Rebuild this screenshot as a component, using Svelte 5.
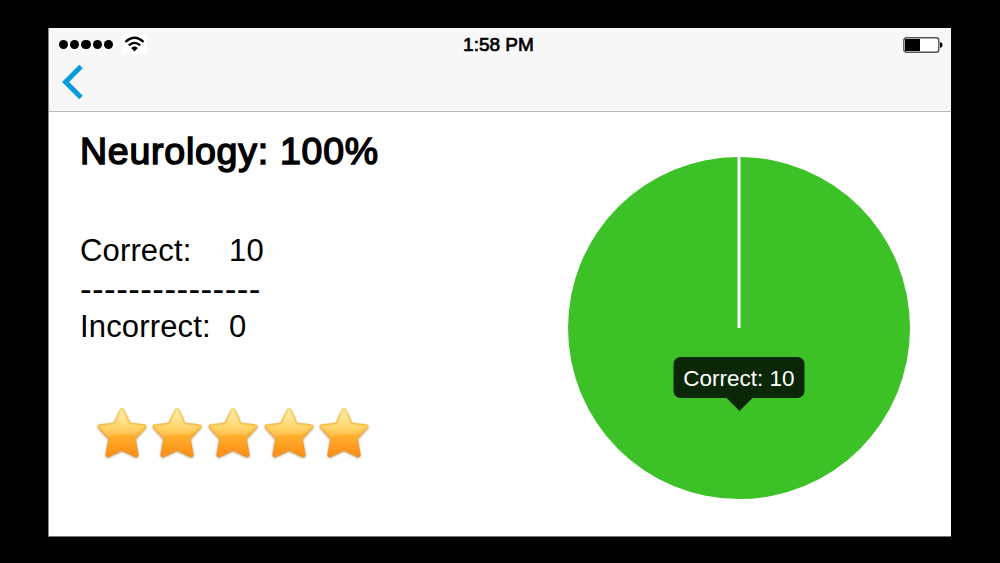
<script>
    let category = "Neurology";
    let correct = 10;
    let incorrect = 0;
    let rating = 5;

    $: percent = Math.round((correct / (correct + incorrect)) * 100);
</script>

<div class="device">
    <div class="screen">
        <header>
            <div class="status">
                <div class="signal">
                    <div class="dots">
                        {#each Array(5) as _}
                            <span></span>
                        {/each}
                    </div>
                    <svg class="wifi" width="25" height="20" viewBox="0 0 25 20">
                        <g fill="none" stroke="#000" stroke-width="2.3">
                            <path d="M3.4 8Q12.5 -0.4 21.6 8" />
                            <path d="M6.8 11.4Q12.5 6.4 18.2 11.4" />
                        </g>
                        <path d="M9.2 14Q12.5 11.2 15.8 14L12.5 17.4Z" />
                    </svg>
                </div>
                <div class="time">1:58 PM</div>
                <div class="power">
                    <svg width="40" height="16" viewBox="0 0 40 16">
                        <rect x="0.8" y="0.8" width="35" height="14.4" rx="2.5" fill="#fff" stroke="#555" stroke-width="1.4" />
                        <rect x="2" y="2" width="15" height="12" />
                        <path d="M37 5Q39.6 5.5 39.6 8T37 11Z" />
                    </svg>
                </div>
            </div>
            <button class="back" aria-label="Back">
                <svg width="22" height="36" viewBox="0 0 22 36">
                    <path d="M19 2.4L3.6 18L19 33.4" fill="none" stroke="#059bdc" stroke-width="5" />
                </svg>
            </button>
        </header>

        <main>
            <section class="summary">
                <h1>{category}: {percent}%</h1>
                <div class="stats">
                    <div class="row"><span class="label">Correct:</span><span>{correct}</span></div>
                    <div class="divider">---------------</div>
                    <div class="row"><span class="label">Incorrect:</span><span>{incorrect}</span></div>
                </div>

                <!-- Rating -->
                <div class="stars">
                    <svg class="defs" width="0" height="0">
                        <linearGradient id="gold" x1="0" y1="0" x2="0" y2="1">
                            <stop offset="0" stop-color="#ffe98c" />
                            <stop offset="0.4" stop-color="#ffc944" />
                            <stop offset="0.6" stop-color="#ffac2a" />
                            <stop offset="1" stop-color="#ff8c16" />
                        </linearGradient>
                        <linearGradient id="rim" x1="0" y1="0" x2="0" y2="1">
                            <stop offset="0" stop-color="#f8d469" />
                            <stop offset="1" stop-color="#ef8c1c" />
                        </linearGradient>
                        <linearGradient id="shine" x1="0" y1="0" x2="0" y2="1">
                            <stop offset="0" stop-color="#fff" stop-opacity="0.35" />
                            <stop offset="1" stop-color="#fff" stop-opacity="0.12" />
                        </linearGradient>
                    </svg>
                    {#each Array(rating) as _}
                        <svg class="star" viewBox="0 0 52 52">
                            <path
                                d="M24.4 2.8Q26 0.6 27.6 2.8L34 16.2L48.6 17.9Q51 18.8 49.2 20.8L39.2 31.8L42 47.6Q41.8 50.2 39.4 49.4L26 43.2L12.6 49.4Q10.2 50.2 10 47.6L12.8 31.8L2.8 20.8Q1 18.8 3.4 17.9L18 16.2Z"
                                fill="url(#gold)" stroke="url(#rim)" stroke-width="1.2" stroke-linejoin="round"
                            />
                            <path d="M26 4L33 17.5L48 19.3L39 28Q24 25 12.5 30L4 19.3L19 17.5Z" fill="url(#shine)" />
                        </svg>
                    {/each}
                </div>
            </section>

            <section class="chart">
                <div class="pie">
                    <svg width="342" height="342" viewBox="0 0 342 342">
                        <circle cx="171" cy="171" r="171" fill="#3cc127" />
                        <path d="M171 0V171" stroke="#fff" stroke-width="3" />
                    </svg>
                    <div class="tooltip">Correct: {correct}</div>
                </div>
            </section>
        </main>
    </div>
</div>

<style>
    :global(body) {
        background: #000;
    }

    .device {
        box-sizing: border-box;
        width: 1000px;
        height: 563px;
        padding: 28px 49px 26px 48px;
        background: #000;
        font-family: "Liberation Sans", Arial, sans-serif;
        color: #000;
    }

    .screen {
        box-sizing: border-box;
        height: 509px;
        background: #fff;
        border-left: 1px solid #888;
        border-bottom: 1px solid #777;
        overflow: hidden;
    }

    header {
        box-sizing: border-box;
        height: 84px;
        background: #f7f7f7;
        border-bottom: 1px solid #b9b9b9;
    }

    .status {
        display: grid;
        grid-template-columns: 1fr auto 1fr;
        align-items: center;
        height: 33px;
        padding: 0 8px 0 10px;
    }

    .signal {
        display: flex;
        align-items: center;
        gap: 9px;
    }

    .dots {
        display: flex;
        gap: 2px;
    }

    .dots span {
        width: 9.2px;
        height: 9.2px;
        border-radius: 50%;
        background: #000;
    }

    .wifi {
        background: #fff;
        margin-top: -2px;
    }

    /* thin stroke gives a medium weight between regular and bold */
    .time {
        padding-right: 5px;
        font-size: 19px;
        line-height: 33px;
        -webkit-text-stroke: 0.7px #000;
        white-space: nowrap;
    }

    .power {
        display: flex;
        justify-content: flex-end;
    }

    .back {
        display: block;
        margin: 3px 0 0 12.5px;
        padding: 0;
        border: 0;
        background: none;
        cursor: pointer;
    }

    .back svg {
        display: block;
    }

    main {
        display: flex;
        justify-content: space-between;
        padding: 20px 41px 0 31px;
    }

    h1 {
        margin: 0;
        font-size: 37.5px;
        font-weight: normal;
        line-height: 38px;
        letter-spacing: 0.75px;
        -webkit-text-stroke: 1.5px #000;
        white-space: nowrap;
    }

    .stats {
        margin-top: 62px;
        font-size: 31px;
        line-height: 38px;
    }

    .row {
        display: flex;
        letter-spacing: 0.15px;
    }

    .label {
        width: 149px;
    }

    .divider {
        font-size: 35px;
        letter-spacing: 0.4px;
        white-space: nowrap;
    }

    .stars {
        display: flex;
        gap: 3.7px;
        margin: 61px 0 0 15.5px;
    }

    .defs {
        position: absolute;
    }

    .star {
        width: 52px;
        height: 52px;
        filter: drop-shadow(0 1px 1px rgba(120, 90, 20, 0.5));
    }

    .pie {
        position: relative;
        margin-top: 25px;
        width: 342px;
        height: 342px;
    }

    .pie svg {
        display: block;
    }

    .tooltip {
        position: absolute;
        top: 200px;
        left: 50%;
        transform: translateX(-50%);
        width: 131px;
        height: 41px;
        border-radius: 7px;
        background: #0c2608;
        color: #fff;
        font-size: 22.5px;
        line-height: 43px;
        text-align: center;
        white-space: nowrap;
    }

    .tooltip::after {
        content: "";
        position: absolute;
        top: 100%;
        left: 50%;
        margin-left: -13px;
        border: 13px solid transparent;
        border-top-color: #0c2608;
        border-bottom: 0;
    }
</style>
